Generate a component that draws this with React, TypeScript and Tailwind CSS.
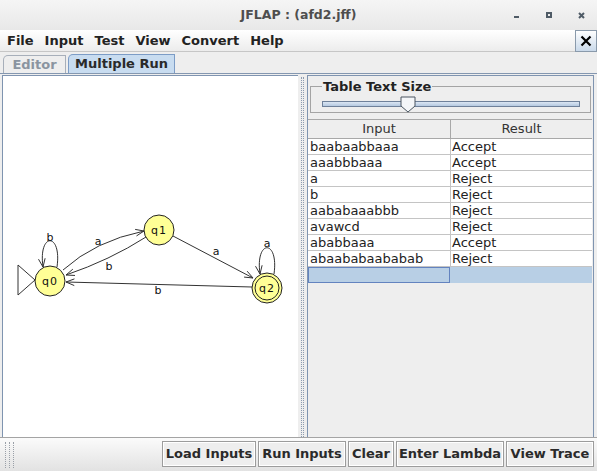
import React from 'react';

const rows = [
  ['baabaabbaaa', 'Accept'],
  ['aaabbbaaa', 'Accept'],
  ['a', 'Reject'],
  ['b', 'Reject'],
  ['aababaaabbb', 'Reject'],
  ['avawcd', 'Reject'],
  ['ababbaaa', 'Accept'],
  ['abaababaababab', 'Reject'],
];

const buttons = [
  { label: 'Load Inputs', w: 'w-[94px]' },
  { label: 'Run Inputs', w: 'w-[88px]' },
  { label: 'Clear', w: 'w-[46px]' },
  { label: 'Enter Lambda', w: 'w-[108px]' },
  { label: 'View Trace', w: 'w-[88px]' },
];

function head(tx: number, ty: number, fx: number, fy: number) {
  const a = Math.atan2(ty - fy, tx - fx);
  const L = 9;
  const s = 0.38;
  const x1 = tx - L * Math.cos(a - s);
  const y1 = ty - L * Math.sin(a - s);
  const x2 = tx - L * Math.cos(a + s);
  const y2 = ty - L * Math.sin(a + s);
  return `M${x1} ${y1} L${tx} ${ty} L${x2} ${y2}`;
}

function Diagram() {
  const stroke = '#333';
  return (
    <svg width={295} height={361} viewBox="3 78 295 361" className="block">
      <g fill="none" stroke={stroke} strokeWidth={1}>
        {/* loops */}
        <path d="M57 269 C62 234, 38 234, 43 269" />
        <path d={head(43, 269, 38, 234)} />
        <path d="M274 276 C279 241, 255 241, 260 276" />
        <path d={head(260, 276, 255, 241)} />
        {/* q0 -> q1 */}
        <path d="M63 272 Q95 243 144 233" />
        <path d={head(144, 233, 95, 243)} />
        {/* q1 -> q0 */}
        <path d="M146 239 Q110 262 66 277" />
        <path d={head(66, 277, 110, 262)} />
        {/* q1 -> q2 */}
        <path d="M173 238 L253 280" />
        <path d={head(253, 280, 173, 238)} />
        {/* q2 -> q0 */}
        <path d="M252 289 L66 284" />
        <path d={head(66, 284, 252, 289)} />
        {/* initial marker */}
        <path d="M18 267 L18 297 L35 282 Z" fill="#fff" />
      </g>
      <g fill="#ffff96" stroke="#222" strokeWidth={1}>
        <circle cx={50} cy={283} r={15} />
        <circle cx={159} cy={232} r={15} />
        <circle cx={267} cy={290} r={15} />
        <circle cx={267} cy={290} r={12} fill="none" />
      </g>
      <g fill="#111" fontSize={11} fontFamily="'DejaVu Sans', sans-serif" textAnchor="middle">
        <text x={50} y={287} letterSpacing={1}>q0</text>
        <text x={159} y={236} letterSpacing={1}>q1</text>
        <text x={267} y={294} letterSpacing={1}>q2</text>
        <text x={50} y={243}>b</text>
        <text x={267} y={249}>a</text>
        <text x={98} y={247}>a</text>
        <text x={109} y={272}>b</text>
        <text x={216} y={257}>a</text>
        <text x={158} y={296}>b</text>
      </g>
    </svg>
  );
}

export default function App() {
  return (
    <div className="w-[597px] h-[471px] overflow-hidden bg-[#eeeeee] flex flex-col font-['DejaVu_Sans',sans-serif] text-[13px] text-[#222]">
      {/* Title bar */}
      <div className="h-[30px] shrink-0 grid grid-cols-[1fr_auto_1fr] items-center bg-gradient-to-b from-[#f5f5f5] to-[#e8e8e8]">
        <div />
        <span className="font-bold text-[12.5px] text-[#4e4e4e]">JFLAP : (afd2.jff)</span>
        <div className="flex items-center justify-end h-full">
          <span className="w-[5px] h-[2px] bg-[#4f5b66] mt-[4px]" />
          <span className="ml-[27px] w-[6px] h-[6px] border-2 border-[#4f5b66]" />
          <svg width={7} height={7} viewBox="0 0 7 7" className="ml-[26px] mr-[12px]">
            <path d="M1 1 L6 6 M6 1 L1 6" stroke="#4f5b66" strokeWidth={2} />
          </svg>
        </div>
      </div>

      {/* Menu bar */}
      <div className="h-[22px] shrink-0 flex items-center bg-gradient-to-b from-[#ffffff] to-[#ececec] border-b border-[#c6c6c6]">
        <div className="flex gap-[11px] pl-[7px] font-bold text-[#222]">
          <span>File</span>
          <span>Input</span>
          <span>Test</span>
          <span>View</span>
          <span>Convert</span>
          <span>Help</span>
        </div>
        <div className="ml-auto w-[22px] h-[22px] flex items-center justify-center border border-[#8a9aab] bg-gradient-to-b from-[#ffffff] to-[#c9d9ea]">
          <svg width={12} height={12} viewBox="0 0 12 12">
            <path d="M1.5 1.5 L10.5 10.5 M10.5 1.5 L1.5 10.5" stroke="#000" strokeWidth={2.2} />
          </svg>
        </div>
      </div>

      {/* Tabs */}
      <div className="h-[22px] shrink-0 flex items-end pl-[3px] pt-[3px] border-b border-[#8497b0]">
        <div className="w-[63px] h-[18px] flex items-center justify-center border border-b-0 border-[#a7afba] rounded-tl-[5px] font-bold text-[#8a94a0]">
          Editor
        </div>
        <div className="ml-[2px] w-[107px] h-[19px] flex items-center justify-center border border-b-0 border-[#7c9cc6] rounded-tl-[5px] bg-[#c8dcf0] font-bold text-[#2a2a2a]">
          Multiple Run
        </div>
      </div>

      {/* Content */}
      <div className="h-[363px] shrink-0 flex pl-[2px] pt-[1px]">
        <div className="w-[296px] border-l border-t border-[#7f94b0] bg-white overflow-hidden">
          <Diagram />
        </div>
        {/* splitter */}
        <div className="w-[9px] flex justify-center pt-[2px]">
          <div className="w-[3px] border-l border-r border-dotted border-[#8c9bb0]" />
        </div>
        <div className="w-[287px] flex flex-col border-l border-r border-t border-[#7f94b0] bg-[#eeeeee]">
          <fieldset className="mx-[2px] mt-[4px] h-[33px] border border-[#a4a4a4] px-[9px]">
            <legend className="ml-[2px] px-[1px] font-bold text-[#222] leading-[13px]">Table Text Size</legend>
            <div className="relative h-[18px] mt-[3px]">
              <div className="absolute left-[2px] right-[1px] top-[5px] h-[6px] border border-[#6f819a] bg-gradient-to-b from-[#dbe6f3] to-[#b5c9e0]" />
              <svg width={16} height={17} viewBox="0 0 16 17" className="absolute left-[80px] top-0">
                <path d="M1 1 L15 1 L15 10 L8 16 L1 10 Z" fill="#f4f6f8" stroke="#4a5560" />
              </svg>
            </div>
          </fieldset>
          <div className="mt-[6px] mr-[1px] flex flex-col">
            <div className="h-[20px] flex bg-[#eeeeee] border-y border-[#a8a8a8]">
              <div className="w-[143px] flex items-center justify-center border-r border-[#a8a8a8] text-[#333]">Input</div>
              <div className="flex-1 flex items-center justify-center text-[#333]">Result</div>
            </div>
            {rows.map(([input, result]) => (
              <div key={input} className="h-[16px] flex bg-white border-b border-[#c4c4c4]">
                <div className="w-[143px] pl-[2px] leading-[15px] border-r border-[#c4c4c4]">{input}</div>
                <div className="flex-1 pl-[1px] leading-[15px]">{result}</div>
              </div>
            ))}
            <div className="h-[16px] flex bg-[#b8cfe5]">
              <div className="w-[142px] border border-[#6383bf]" />
              <div className="flex-1" />
            </div>
          </div>
        </div>
      </div>

      {/* Bottom bar */}
      <div className="flex-1 flex items-start border-t border-[#a4a4a4] bg-gradient-to-b from-[#fbfbfb] to-[#e2e2e2]">
        <div className="ml-[5px] mt-[4px] w-[9px] h-[26px] flex justify-between">
          <div className="border-l border-dotted border-[#9aa0a8]" />
          <div className="border-l border-dotted border-[#9aa0a8]" />
          <div className="border-l border-dotted border-[#9aa0a8]" />
        </div>
        <div className="ml-auto mr-[3px] mt-[3px] flex gap-[2px]">
          {buttons.map(b => (
            <div key={b.label} className={`${b.w} h-[26px] border border-[#9c9c9c] bg-[#eeeeee] flex`}>
              <div className="flex-1 flex items-center justify-center border border-white font-bold text-[#2a2a2a]">
                {b.label}
              </div>
            </div>
          ))}
        </div>
      </div>
    </div>
  );
}
